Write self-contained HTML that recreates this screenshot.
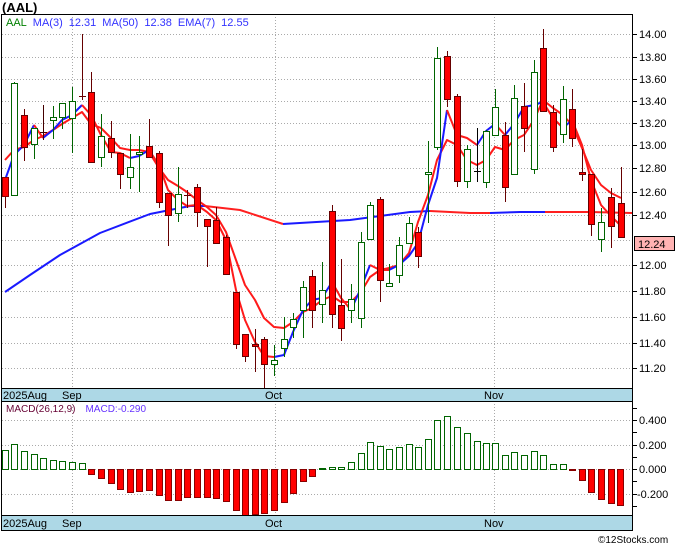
<!DOCTYPE html>
<html><head><meta charset="utf-8"><style>
body{margin:0;background:#fff;}
svg text{font-family:"Liberation Sans",sans-serif;}
</style></head><body>
<svg width="680" height="546" viewBox="0 0 680 546" xmlns="http://www.w3.org/2000/svg">
<rect width="680" height="546" fill="#fff"/>
<text x="2" y="12" font-size="13" font-weight="bold" fill="#000">(AAL)</text>
<!-- grid main -->
<g stroke="#aaa" stroke-dasharray="1,2" stroke-width="1">
<line x1="2" x2="632" y1="34.5" y2="34.5"/><line x1="2" x2="632" y1="57.5" y2="57.5"/><line x1="2" x2="632" y1="79.5" y2="79.5"/><line x1="2" x2="632" y1="101.5" y2="101.5"/><line x1="2" x2="632" y1="123.5" y2="123.5"/><line x1="2" x2="632" y1="145.5" y2="145.5"/><line x1="2" x2="632" y1="168.5" y2="168.5"/><line x1="2" x2="632" y1="192.5" y2="192.5"/><line x1="2" x2="632" y1="215.5" y2="215.5"/><line x1="2" x2="632" y1="240.5" y2="240.5"/><line x1="2" x2="632" y1="265.5" y2="265.5"/><line x1="2" x2="632" y1="291.5" y2="291.5"/><line x1="2" x2="632" y1="317.5" y2="317.5"/><line x1="2" x2="632" y1="343.5" y2="343.5"/><line x1="2" x2="632" y1="368.5" y2="368.5"/>
<line x1="72.5" x2="72.5" y1="14" y2="388"/><line x1="275.5" x2="275.5" y1="14" y2="388"/><line x1="494.5" x2="494.5" y1="14" y2="388"/>
<line x1="2" x2="632" y1="420.5" y2="420.5"/><line x1="2" x2="632" y1="445.5" y2="445.5"/><line x1="2" x2="632" y1="469.5" y2="469.5"/><line x1="2" x2="632" y1="494.5" y2="494.5"/>
<line x1="72.5" x2="72.5" y1="401" y2="515"/><line x1="275.5" x2="275.5" y1="401" y2="515"/><line x1="494.5" x2="494.5" y1="401" y2="515"/>
</g>
<text x="6" y="26" font-size="11"><tspan fill="#008000">AAL</tspan><tspan fill="#3333ff" dx="6">MA(3)</tspan><tspan fill="#3333ff" dx="6">12.31</tspan><tspan fill="#3333ff" dx="6">MA(50)</tspan><tspan fill="#3333ff" dx="6">12.38</tspan><tspan fill="#3333ff" dx="6">EMA(7)</tspan><tspan fill="#3333ff" dx="6">12.55</tspan></text>
<!-- MA50 -->
<g fill="none" stroke-width="2" stroke-linejoin="round">
<polyline stroke="#1a1aff" points="5,292 30,275 60,255 100,233 150,214 190,206 205,206"/>
<polyline stroke="#ff2020" points="205,206 240,210 283,224"/>
<polyline stroke="#1a1aff" points="283,224 350,220 410,212 430,211"/>
<polyline stroke="#ff2020" points="430,211 450,212 470,213 490,213"/>
<polyline stroke="#1a1aff" points="490,213 520,212 545,212"/>
<polyline stroke="#ff2020" points="545,212 590,212 632,213"/>
<!-- EMA7 -->
<polyline stroke="#ff1a1a" points="5,160 14,150 24,147 34,140 43,136 53,130 62,124 72,118 82,112 91,124 101,128 111,138 120,148 130,150 139,150 149,152 159,168 168,180 178,186 187,192 197,200 207,207 216,215 226,232 236,260 245,285 255,300 264,318 274,327 284,328 293,322 303,312 312,308 322,300 332,296 341,302 351,302 361,292 370,277 380,270 389,268 399,265 409,253 418,222 428,195 437,160 447,140 457,145 467,160 477,165 486,160 495,147 505,150 514,140 524,135 534,120 543,100 553,108 563,115 572,125 582,148 591,170 601,185 611,193 621,198"/>
<!-- MA3 -->
<polyline stroke="#1a1aff" points="5,180 14,155 24,145 34,125"/>
<polyline stroke="#ff1a1a" points="34,125 43,138"/>
<polyline stroke="#1a1aff" points="43,138 53,130 62,120 72,115 82,105"/>
<polyline stroke="#ff1a1a" points="82,105 91,115 101,135 111,152 120,153 130,158"/>
<polyline stroke="#1a1aff" points="130,158 139,156 149,150"/>
<polyline stroke="#ff1a1a" points="149,150 159,165 168,190 178,200 187,206 197,205 207,212 216,220 226,240 236,290 245,320 255,342 264,356 274,357"/>
<polyline stroke="#1a1aff" points="274,357 284,355 293,332 303,310 312,300 322,298 332,282"/>
<polyline stroke="#ff1a1a" points="332,282 341,298 351,310"/>
<polyline stroke="#1a1aff" points="351,310 361,288 370,265"/>
<polyline stroke="#ff1a1a" points="370,265 380,270 389,270"/>
<polyline stroke="#1a1aff" points="389,270 399,265 409,256 418,243 428,205 437,178 447,110"/>
<polyline stroke="#ff1a1a" points="447,110 457,135 467,138 477,145"/>
<polyline stroke="#1a1aff" points="477,145 486,131 495,124"/>
<polyline stroke="#ff1a1a" points="495,124 505,135"/>
<polyline stroke="#1a1aff" points="505,135 514,124 524,107 534,105 543,102"/>
<polyline stroke="#ff1a1a" points="543,102 553,118 563,128"/>
<polyline stroke="#1a1aff" points="563,128 572,120"/>
<polyline stroke="#ff1a1a" points="572,120 582,145 591,180 601,205 611,216 621,226"/>
</g>
<!-- candles -->
<g stroke-width="1">
<g stroke="#600"><line x1="5.5" x2="5.5" y1="177" y2="208"/><rect x="2.5" y="177.5" width="6" height="19" fill="#f00" stroke="#800"/></g>
<g stroke="#006400"><line x1="14.5" x2="14.5" y1="82" y2="195"/><rect x="11.5" y="83.5" width="6" height="112" fill="#fff"/></g>
<g stroke="#600"><line x1="24.5" x2="24.5" y1="109" y2="161"/><rect x="21.5" y="115.5" width="6" height="32" fill="#f00"/></g>
<g stroke="#006400"><line x1="34.5" x2="34.5" y1="128" y2="159"/><rect x="31.5" y="128.5" width="6" height="16" fill="#fff"/></g>
<g stroke="#400"><line x1="43.5" x2="43.5" y1="105" y2="140"/><line x1="40" x2="47" y1="132.5" y2="132.5"/></g>
<g stroke="#006400"><line x1="53.5" x2="53.5" y1="106" y2="139"/><rect x="50.5" y="117.5" width="6" height="3" fill="#fff"/></g>
<g stroke="#006400"><line x1="62.5" x2="62.5" y1="103" y2="129"/><rect x="59.5" y="103.5" width="6" height="14" fill="#fff"/></g>
<g stroke="#006400"><line x1="72.5" x2="72.5" y1="87" y2="153"/><rect x="69.5" y="101.5" width="6" height="17" fill="#fff"/></g>
<g stroke="#600"><line x1="82.5" x2="82.5" y1="34" y2="100"/><line x1="79" x2="86" y1="96.5" y2="96.5"/></g>
<g stroke="#600"><line x1="91.5" x2="91.5" y1="72" y2="163"/><rect x="88.5" y="92.5" width="6" height="70" fill="#f00"/></g>
<g stroke="#006400"><line x1="101.5" x2="101.5" y1="114" y2="167"/><rect x="98.5" y="136.5" width="6" height="21" fill="#fff"/></g>
<g stroke="#600"><line x1="111.5" x2="111.5" y1="121" y2="158"/><rect x="108.5" y="138.5" width="6" height="14" fill="#f00"/></g>
<g stroke="#600"><line x1="120.5" x2="120.5" y1="153" y2="189"/><rect x="117.5" y="153.5" width="6" height="21" fill="#f00"/></g>
<g stroke="#006400"><line x1="130.5" x2="130.5" y1="134" y2="189"/><rect x="127.5" y="167.5" width="6" height="10" fill="#fff"/></g>
<g stroke="#006400"><line x1="139.5" x2="139.5" y1="136" y2="192"/><rect x="136.5" y="152.5" width="6" height="2" fill="#fff"/></g>
<g stroke="#600"><line x1="149.5" x2="149.5" y1="119" y2="157"/><rect x="146.5" y="146.5" width="6" height="11" fill="#f00"/></g>
<g stroke="#600"><line x1="159.5" x2="159.5" y1="151" y2="208"/><rect x="156.5" y="153.5" width="6" height="49" fill="#f00"/></g>
<g stroke="#600"><line x1="168.5" x2="168.5" y1="193" y2="246"/><rect x="165.5" y="193.5" width="6" height="22" fill="#f00"/></g>
<g stroke="#006400"><line x1="178.5" x2="178.5" y1="167" y2="222"/><rect x="175.5" y="194.5" width="6" height="19" fill="#fff"/></g>
<g stroke="#600"><line x1="187.5" x2="187.5" y1="190" y2="208"/><line x1="184" x2="191" y1="195.5" y2="195.5"/></g>
<g stroke="#600"><line x1="197.5" x2="197.5" y1="184" y2="227"/><rect x="194.5" y="187.5" width="6" height="25" fill="#f00"/></g>
<g stroke="#600"><line x1="207.5" x2="207.5" y1="219" y2="267"/><rect x="204.5" y="219.5" width="6" height="7" fill="#f00"/></g>
<g stroke="#600"><line x1="216.5" x2="216.5" y1="207" y2="243"/><rect x="213.5" y="220.5" width="6" height="23" fill="#f00"/></g>
<g stroke="#600"><line x1="226.5" x2="226.5" y1="235" y2="274"/><rect x="223.5" y="237.5" width="6" height="37" fill="#f00"/></g>
<g stroke="#600"><line x1="236.5" x2="236.5" y1="292" y2="349"/><rect x="233.5" y="292.5" width="6" height="52" fill="#f00"/></g>
<g stroke="#600"><line x1="245.5" x2="245.5" y1="334" y2="362"/><rect x="242.5" y="334.5" width="6" height="22" fill="#f00"/></g>
<g stroke="#600"><line x1="255.5" x2="255.5" y1="329" y2="372"/><rect x="252.5" y="344.5" width="6" height="2" fill="#f00"/></g>
<g stroke="#600"><line x1="264.5" x2="264.5" y1="337" y2="390"/><rect x="261.5" y="339.5" width="6" height="25" fill="#f00"/></g>
<g stroke="#006400"><line x1="274.5" x2="274.5" y1="345" y2="376"/><rect x="271.5" y="360.5" width="6" height="4" fill="#fff"/></g>
<g stroke="#006400"><line x1="284.5" x2="284.5" y1="317" y2="357"/><rect x="281.5" y="339.5" width="6" height="9" fill="#fff"/></g>
<g stroke="#006400"><line x1="293.5" x2="293.5" y1="313" y2="338"/><rect x="290.5" y="319.5" width="6" height="8" fill="#fff"/></g>
<g stroke="#006400"><line x1="303.5" x2="303.5" y1="281" y2="338"/><rect x="300.5" y="287.5" width="6" height="23" fill="#fff"/></g>
<g stroke="#600"><line x1="312.5" x2="312.5" y1="270" y2="328"/><rect x="309.5" y="276.5" width="6" height="34" fill="#f00"/></g>
<g stroke="#006400"><line x1="322.5" x2="322.5" y1="262" y2="323"/><rect x="319.5" y="290.5" width="6" height="14" fill="#fff"/></g>
<g stroke="#600"><line x1="332.5" x2="332.5" y1="205" y2="328"/><rect x="329.5" y="211.5" width="6" height="103" fill="#f00"/></g>
<g stroke="#600"><line x1="341.5" x2="341.5" y1="259" y2="341"/><rect x="338.5" y="305.5" width="6" height="23" fill="#f00"/></g>
<g stroke="#006400"><line x1="351.5" x2="351.5" y1="284" y2="323"/><rect x="348.5" y="299.5" width="6" height="11" fill="#fff"/></g>
<g stroke="#006400"><line x1="361.5" x2="361.5" y1="232" y2="328"/><rect x="358.5" y="242.5" width="6" height="76" fill="#fff"/></g>
<g stroke="#006400"><line x1="370.5" x2="370.5" y1="202" y2="239"/><rect x="367.5" y="205.5" width="6" height="34" fill="#fff"/></g>
<g stroke="#600"><line x1="380.5" x2="380.5" y1="197" y2="302"/><rect x="377.5" y="199.5" width="6" height="81" fill="#f00"/></g>
<g stroke="#006400"><line x1="389.5" x2="389.5" y1="264" y2="287"/><rect x="386.5" y="283.5" width="6" height="3" fill="#fff"/></g>
<g stroke="#006400"><line x1="399.5" x2="399.5" y1="237" y2="283"/><rect x="396.5" y="245.5" width="6" height="30" fill="#fff"/></g>
<g stroke="#006400"><line x1="409.5" x2="409.5" y1="217" y2="243"/><rect x="406.5" y="223.5" width="6" height="20" fill="#fff"/></g>
<g stroke="#600"><line x1="418.5" x2="418.5" y1="227" y2="268"/><rect x="415.5" y="232.5" width="6" height="24" fill="#f00"/></g>
<g stroke="#006400"><line x1="428.5" x2="428.5" y1="141" y2="223"/><rect x="425.5" y="172.5" width="6" height="2" fill="#fff"/></g>
<g stroke="#006400"><line x1="437.5" x2="437.5" y1="47" y2="150"/><rect x="434.5" y="58.5" width="6" height="89" fill="#fff"/></g>
<g stroke="#600"><line x1="447.5" x2="447.5" y1="51" y2="107"/><rect x="444.5" y="56.5" width="6" height="43" fill="#f00"/></g>
<g stroke="#600"><line x1="457.5" x2="457.5" y1="94" y2="187"/><rect x="454.5" y="96.5" width="6" height="85" fill="#f00"/></g>
<g stroke="#006400"><line x1="467.5" x2="467.5" y1="145" y2="188"/><rect x="464.5" y="149.5" width="6" height="32" fill="#fff"/></g>
<g stroke="#000"><line x1="477.5" x2="477.5" y1="128" y2="182"/><line x1="474" x2="481" y1="171.5" y2="171.5"/></g>
<g stroke="#006400"><line x1="486.5" x2="486.5" y1="130" y2="188"/><rect x="483.5" y="131.5" width="6" height="51" fill="#fff"/></g>
<g stroke="#006400"><line x1="495.5" x2="495.5" y1="89" y2="135"/><rect x="492.5" y="107.5" width="6" height="28" fill="#fff"/></g>
<g stroke="#600"><line x1="505.5" x2="505.5" y1="122" y2="202"/><rect x="502.5" y="135.5" width="6" height="52" fill="#f00"/></g>
<g stroke="#006400"><line x1="514.5" x2="514.5" y1="85" y2="174"/><rect x="511.5" y="98.5" width="6" height="76" fill="#fff"/></g>
<g stroke="#600"><line x1="524.5" x2="524.5" y1="83" y2="152"/><rect x="521.5" y="106.5" width="6" height="22" fill="#f00"/></g>
<g stroke="#006400"><line x1="534.5" x2="534.5" y1="60" y2="174"/><rect x="531.5" y="72.5" width="6" height="97" fill="#fff"/></g>
<g stroke="#600"><line x1="543.5" x2="543.5" y1="29" y2="111"/><rect x="540.5" y="48.5" width="6" height="63" fill="#f00"/></g>
<g stroke="#600"><line x1="553.5" x2="553.5" y1="105" y2="152"/><rect x="550.5" y="112.5" width="6" height="35" fill="#f00"/></g>
<g stroke="#006400"><line x1="563.5" x2="563.5" y1="86" y2="143"/><rect x="560.5" y="99.5" width="6" height="35" fill="#fff"/></g>
<g stroke="#600"><line x1="572.5" x2="572.5" y1="89" y2="147"/><rect x="569.5" y="109.5" width="6" height="29" fill="#f00"/></g>
<g stroke="#600"><line x1="582.5" x2="582.5" y1="149" y2="181"/><rect x="579.5" y="172.5" width="6" height="2" fill="#f00"/></g>
<g stroke="#600"><line x1="591.5" x2="591.5" y1="174" y2="236"/><rect x="588.5" y="174.5" width="6" height="50" fill="#f00"/></g>
<g stroke="#006400"><line x1="601.5" x2="601.5" y1="208" y2="252"/><rect x="598.5" y="222.5" width="6" height="17" fill="#fff"/></g>
<g stroke="#600"><line x1="611.5" x2="611.5" y1="188" y2="248"/><rect x="608.5" y="197.5" width="6" height="29" fill="#f00"/></g>
<g stroke="#600"><line x1="621.5" x2="621.5" y1="167" y2="237"/><rect x="618.5" y="203.5" width="6" height="34" fill="#f00"/></g>
</g>
<!-- MACD bars -->
<g stroke="#006400" fill="#fff">
<rect x="2.5" y="450.5" width="6" height="19"/><rect x="11.5" y="444.5" width="6" height="25"/><rect x="21.5" y="451.5" width="6" height="18"/><rect x="31.5" y="454.5" width="6" height="15"/><rect x="40.5" y="458.5" width="6" height="11"/><rect x="50.5" y="460.5" width="6" height="9"/><rect x="59.5" y="461.5" width="6" height="8"/><rect x="69.5" y="462.5" width="6" height="7"/><rect x="79.5" y="463.5" width="6" height="6"/>
<rect x="319.5" y="468.5" width="6" height="1"/><rect x="329.5" y="467.5" width="6" height="2"/><rect x="338.5" y="467.5" width="6" height="2"/><rect x="348.5" y="462.5" width="6" height="7"/><rect x="358.5" y="453.5" width="6" height="16"/><rect x="367.5" y="442.5" width="6" height="27"/><rect x="377.5" y="446.5" width="6" height="23"/><rect x="386.5" y="449.5" width="6" height="20"/><rect x="396.5" y="447.5" width="6" height="22"/><rect x="406.5" y="444.5" width="6" height="25"/><rect x="415.5" y="447.5" width="6" height="22"/><rect x="425.5" y="439.5" width="6" height="30"/><rect x="434.5" y="420.5" width="6" height="49"/><rect x="444.5" y="416.5" width="6" height="53"/><rect x="454.5" y="427.5" width="6" height="42"/><rect x="464.5" y="433.5" width="6" height="36"/><rect x="474.5" y="441.5" width="6" height="28"/><rect x="483.5" y="443.5" width="6" height="26"/><rect x="492.5" y="443.5" width="6" height="26"/><rect x="502.5" y="455.5" width="6" height="14"/><rect x="511.5" y="452.5" width="6" height="17"/><rect x="521.5" y="455.5" width="6" height="14"/><rect x="531.5" y="451.5" width="6" height="18"/><rect x="540.5" y="455.5" width="6" height="14"/><rect x="550.5" y="464.5" width="6" height="5"/><rect x="560.5" y="464.5" width="6" height="5"/>
</g>
<g stroke="#800" fill="#f00">
<rect x="88.5" y="469.5" width="6" height="5"/><rect x="98.5" y="469.5" width="6" height="9"/><rect x="108.5" y="469.5" width="6" height="14"/><rect x="117.5" y="469.5" width="6" height="20"/><rect x="127.5" y="469.5" width="6" height="23"/><rect x="136.5" y="469.5" width="6" height="22"/><rect x="146.5" y="469.5" width="6" height="21"/><rect x="156.5" y="469.5" width="6" height="26"/><rect x="165.5" y="469.5" width="6" height="31"/><rect x="175.5" y="469.5" width="6" height="31"/><rect x="184.5" y="469.5" width="6" height="28"/><rect x="194.5" y="469.5" width="6" height="28"/><rect x="204.5" y="469.5" width="6" height="28"/><rect x="213.5" y="469.5" width="6" height="29"/><rect x="223.5" y="469.5" width="6" height="32"/><rect x="233.5" y="469.5" width="6" height="41"/><rect x="242.5" y="469.5" width="6" height="46"/><rect x="252.5" y="469.5" width="6" height="45"/><rect x="261.5" y="469.5" width="6" height="44"/><rect x="271.5" y="469.5" width="6" height="41"/><rect x="281.5" y="469.5" width="6" height="33"/><rect x="290.5" y="469.5" width="6" height="24"/><rect x="300.5" y="469.5" width="6" height="12"/><rect x="309.5" y="469.5" width="6" height="7"/>
<rect x="569.5" y="469.5" width="6" height="1"/><rect x="579.5" y="469.5" width="6" height="11"/><rect x="588.5" y="469.5" width="6" height="23"/><rect x="598.5" y="469.5" width="6" height="30"/><rect x="608.5" y="469.5" width="6" height="34"/><rect x="617.5" y="469.5" width="6" height="36"/>
</g>
<text x="6" y="412" font-size="10"><tspan fill="#660033">MACD(26,12,9)</tspan><tspan fill="#6633ff" dx="10">MACD:-0.290</tspan></text>
<!-- date bands -->
<rect x="1.5" y="388.5" width="631" height="13" fill="#add8e6" stroke="#000"/>
<rect x="1.5" y="515.5" width="631" height="15" fill="#add8e6" stroke="#000"/>
<g font-size="11" fill="#000">
<text x="3" y="399">2025Aug</text><text x="62" y="399">Sep</text><text x="265" y="399">Oct</text><text x="484" y="399">Nov</text>
<text x="3" y="527">2025Aug</text><text x="62" y="527">Sep</text><text x="265" y="527">Oct</text><text x="484" y="527">Nov</text>
</g>
<!-- frame -->
<rect x="1.5" y="14.5" width="631" height="374" fill="none" stroke="#000"/>
<line x1="632.5" x2="632.5" y1="401" y2="515" stroke="#000"/>
<line x1="1.5" x2="1.5" y1="401" y2="515" stroke="#000"/>
<!-- right axis -->
<g stroke="#000">
<line x1="632" x2="637" y1="34.5" y2="34.5"/><line x1="632" x2="637" y1="57.5" y2="57.5"/><line x1="632" x2="637" y1="79.5" y2="79.5"/><line x1="632" x2="637" y1="101.5" y2="101.5"/><line x1="632" x2="637" y1="123.5" y2="123.5"/><line x1="632" x2="637" y1="145.5" y2="145.5"/><line x1="632" x2="637" y1="168.5" y2="168.5"/><line x1="632" x2="637" y1="192.5" y2="192.5"/><line x1="632" x2="637" y1="215.5" y2="215.5"/><line x1="632" x2="637" y1="265.5" y2="265.5"/><line x1="632" x2="637" y1="291.5" y2="291.5"/><line x1="632" x2="637" y1="317.5" y2="317.5"/><line x1="632" x2="637" y1="343.5" y2="343.5"/><line x1="632" x2="637" y1="368.5" y2="368.5"/>
<line x1="632" x2="637" y1="408.5" y2="408.5"/><line x1="632" x2="637" y1="420.5" y2="420.5"/><line x1="632" x2="637" y1="432.5" y2="432.5"/><line x1="632" x2="637" y1="445.5" y2="445.5"/><line x1="632" x2="637" y1="457.5" y2="457.5"/><line x1="632" x2="637" y1="469.5" y2="469.5"/><line x1="632" x2="637" y1="481.5" y2="481.5"/><line x1="632" x2="637" y1="494.5" y2="494.5"/><line x1="632" x2="637" y1="506.5" y2="506.5"/>
</g>
<g font-size="11" fill="#000">
<text x="639" y="38">14.00</text><text x="639" y="61">13.80</text><text x="639" y="83">13.60</text><text x="639" y="105">13.40</text><text x="639" y="127">13.20</text><text x="639" y="149">13.00</text><text x="639" y="172">12.80</text><text x="639" y="196">12.60</text><text x="639" y="219">12.40</text><text x="639" y="269">12.00</text><text x="639" y="295">11.80</text><text x="639" y="321">11.60</text><text x="639" y="347">11.40</text><text x="639" y="372">11.20</text>
<text x="639" y="424">0.400</text><text x="639" y="449">0.200</text><text x="639" y="473">0.000</text><text x="637" y="498">-0.200</text>
</g>
<rect x="634.5" y="236.5" width="40" height="14" fill="#ffb3b3" stroke="#000"/>
<text x="638" y="248" font-size="11" fill="#000">12.24</text>
<text x="598" y="543" font-size="10" fill="#000">©12Stocks.com</text>
</svg>
</body></html>
